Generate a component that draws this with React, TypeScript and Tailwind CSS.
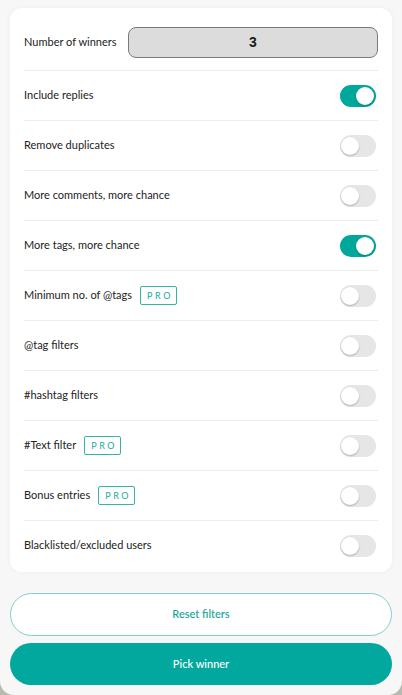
import React, { useState } from 'react';

type Row = { label: string; pro?: boolean; on?: boolean };

const rows: Row[] = [
  { label: 'Include replies', on: true },
  { label: 'Remove duplicates' },
  { label: 'More comments, more chance' },
  { label: 'More tags, more chance', on: true },
  { label: 'Minimum no. of @tags', pro: true },
  { label: '@tag filters' },
  { label: '#hashtag filters' },
  { label: '#Text filter', pro: true },
  { label: 'Bonus entries', pro: true },
  { label: 'Blacklisted/excluded users' },
];

const Toggle = ({ on, onClick }: { on: boolean; onClick: () => void }) => (
  <button
    onClick={onClick}
    className={`relative h-[22px] w-[36px] rounded-full transition ${on ? 'bg-[#00a89c]' : 'bg-[#e6e6e6]'}`}
  >
    <span
      className={`absolute top-[2px] h-[18px] w-[18px] rounded-full bg-white shadow-[0_1px_2px_rgba(0,0,0,0.25)] transition-all ${
        on ? 'left-[16px]' : 'left-[1px]'
      }`}
    />
  </button>
);

const ProBadge = () => (
  <span className="ml-[8px] flex h-[19px] items-center rounded-[2px] border border-[#33b5ab] pl-[6px] pr-[3px] text-[9px] tracking-[2.6px] text-[#1aa99e]">
    PRO
  </span>
);

const App = () => {
  const [state, setState] = useState(rows.map((r) => !!r.on));

  return (
    <div className="min-h-[695px] bg-[#b8bab0] font-['Lato',sans-serif]">
      <div className="flex min-h-[695px] flex-col rounded-b-[14px] bg-[#f7f7f7] px-[10px] pt-[8px]">
        <div className="rounded-[12px] bg-white px-[14px] pt-[6px] pb-[2px] shadow-[0_0_6px_rgba(0,0,0,0.04)]">
          <div className="flex h-[56px] items-center">
            <span className="w-[104px] text-[11px] text-[#222]">Number of winners</span>
            <div className="flex h-[31px] flex-1 items-center justify-center rounded-[8px] border border-[#7a7a7a] bg-[#dcdcdc] font-['Liberation_Sans',sans-serif] text-[14px] font-bold text-[#1a1a1a]">
              3
            </div>
          </div>
          {rows.map((r, i) => (
            <div key={r.label} className="flex h-[50px] items-center justify-between border-t border-[#ececec]">
              <div className="flex items-center text-[11px] text-[#222]">
                <span>{r.label}</span>
                {r.pro && <ProBadge />}
              </div>
              <div className="mr-[2px] flex">
                <Toggle
                  on={state[i]}
                  onClick={() => setState((s) => s.map((v, j) => (j === i ? !v : v)))}
                />
              </div>
            </div>
          ))}
        </div>
        <div className="mt-[21px] flex flex-col gap-[7px]">
          <button className="h-[43px] w-full rounded-full border border-[#7fd0c9] bg-white text-[11px] font-medium text-[#12a398]">
            Reset filters
          </button>
          <button className="h-[42px] w-full rounded-full bg-[#02a89d] text-[11px] font-medium text-white">
            Pick winner
          </button>
        </div>
      </div>
    </div>
  );
};

export default App;
